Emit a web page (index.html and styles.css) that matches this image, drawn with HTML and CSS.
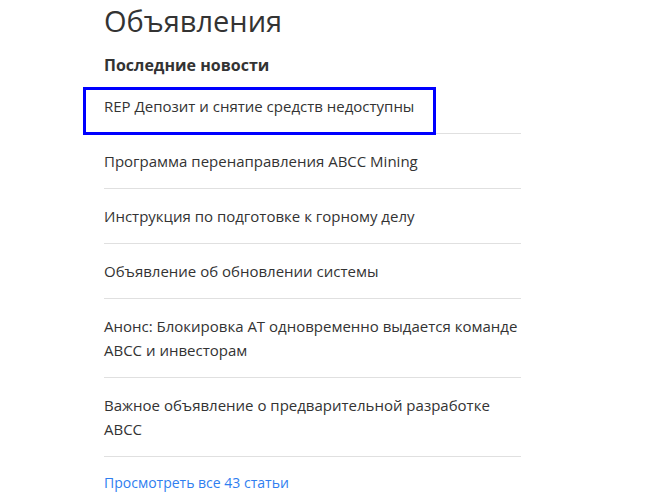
FILE: index.html
```
<!DOCTYPE html>
<html lang="ru">
<head>
<meta charset="utf-8">
<link rel="stylesheet" href="styles.css">
</head>
<body>
<main class="page">
  <h1 class="title">Объявления</h1>
  <h2 class="subtitle">Последние новости</h2>
  <ul class="news">
    <li class="item item-focus"><a href="#">REP Депозит и снятие средств недоступны</a><span class="focus-ring"></span></li>
    <li class="item"><a href="#">Программа перенаправления ABCC Mining</a></li>
    <li class="item"><a href="#">Инструкция по подготовке к горному делу</a></li>
    <li class="item"><a href="#">Объявление об обновлении системы</a></li>
    <li class="item"><a href="#">Анонс: Блокировка AT одновременно выдается команде ABCC и инвесторам</a></li>
    <li class="item"><a href="#">Важное объявление о предварительной разработке ABCC</a></li>
  </ul>
  <a class="more" href="#">Просмотреть все 43 статьи</a>
</main>
</body>
</html>
```
FILE: styles.css
```
html, body {
  margin: 0;
  padding: 0;
  background: #fff;
}
body {
  font-family: "Open Sans", "Noto Sans", sans-serif;
  color: #333;
}
.page {
  width: 417px;
  padding-left: 104px;
  display: flex;
  flex-direction: column;
  align-items: flex-start;
}
.title {
  margin: 0;
  font-size: 29px;
  font-weight: 400;
  line-height: 42px;
  color: #333;
}
.subtitle {
  margin: 11px 0 0;
  font-size: 16px;
  font-weight: 700;
  line-height: 24px;
  color: #333;
}
.news {
  list-style: none;
  margin: 2px 0 0;
  padding: 0;
  width: 100%;
}
.item {
  position: relative;
  padding: 15px 0;
  border-bottom: 1px solid #e0e0e0;
  font-size: 15px;
  line-height: 24px;
}
.item a {
  color: #333;
  text-decoration: none;
}
.focus-ring {
  position: absolute;
  left: -21px;
  top: 8px;
  width: 347px;
  height: 42px;
  border: 3px solid #0000ff;
}
.more {
  margin-top: 14px;
  font-size: 14px;
  line-height: 24px;
  color: #2f7ef0;
  text-decoration: none;
}
```
